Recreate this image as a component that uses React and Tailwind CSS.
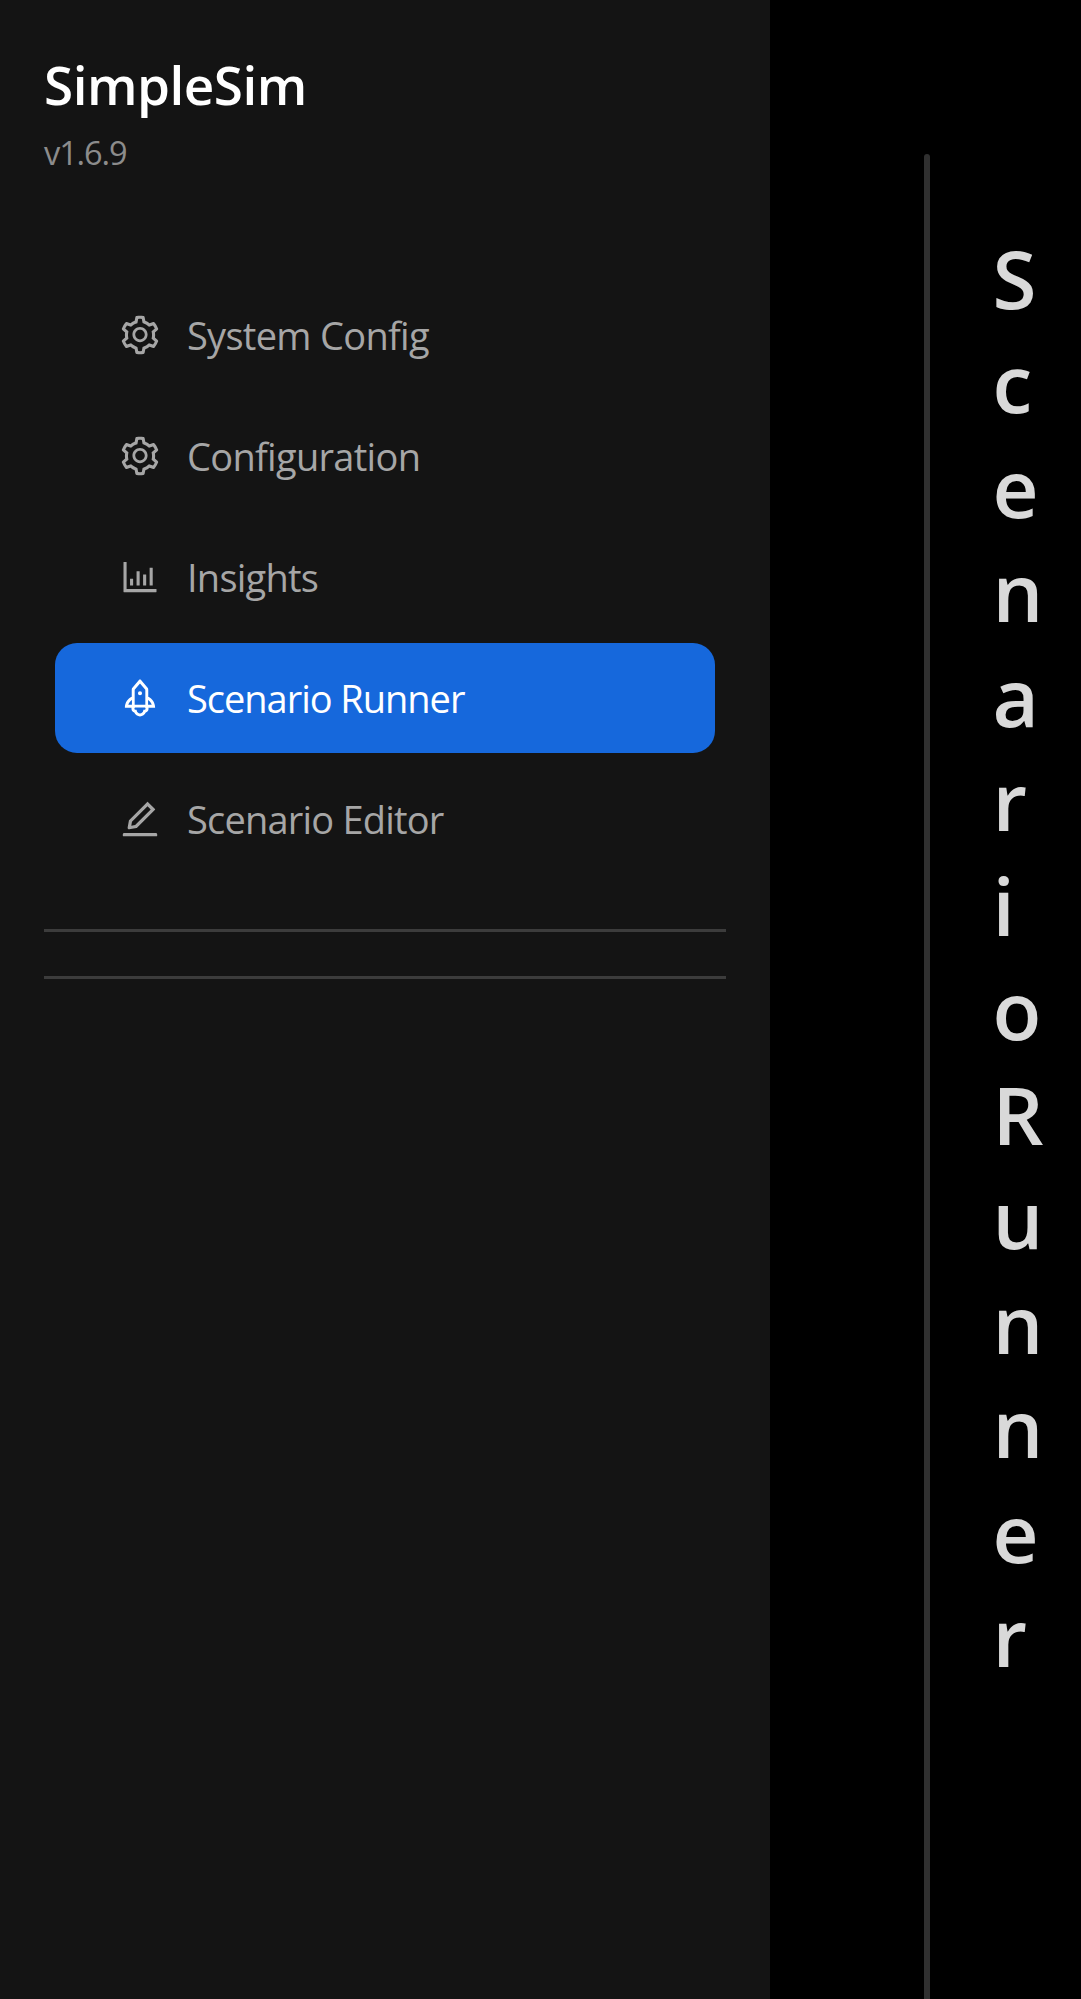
import { AiOutlineSetting, AiOutlineBarChart, AiOutlineRocket, AiOutlineEdit } from "react-icons/ai";

const items = [
  { label: "System Config", Icon: AiOutlineSetting, tracking: "tracking-[-0.7px]" },
  { label: "Configuration", Icon: AiOutlineSetting, tracking: "tracking-[-0.7px]" },
  { label: "Insights", Icon: AiOutlineBarChart, tracking: "tracking-[-0.75px]" },
  { label: "Scenario Runner", Icon: AiOutlineRocket, tracking: "tracking-[-1.03px]", active: true },
  { label: "Scenario Editor", Icon: AiOutlineEdit, tracking: "tracking-[-0.8px]" },
];

export default function App() {
  return (
    <div className="flex h-[1999px] w-[1081px] overflow-hidden bg-black font-['Open_Sans','Noto_Sans',sans-serif]">
      <aside className="w-[770px] shrink-0 bg-[#141414] px-11 pt-[49px]">
        <h1 className="h-[77px] text-[53px] leading-[72px] font-[650] tracking-[-0.5px] text-white">SimpleSim</h1>
        <p className="h-[54px] text-[32.5px] leading-[54px] tracking-[-1.1px] text-[#8c8c8c]">v1.6.9</p>
        <nav className="mx-[11px] mt-[100.4px] flex h-[594px] flex-col gap-[11px]">
          {items.map(({ label, Icon, tracking, active }) => (
            <div key={label} className={active ? "flex h-[110px] shrink-0 items-center rounded-[22px] bg-[#1668dc] pl-[63.4px] text-white" : "flex h-[110px] shrink-0 items-center pl-[63.4px] text-[#a6a6a6]"}>
              <Icon className="size-11" />
              <span className={`ml-[24.6px] text-[38px] ${tracking}`}>{label}</span>
            </div>
          ))}
        </nav>
        <div className="mt-[54.6px] flex flex-col gap-11">
          <div className="h-[3px] bg-[#3c3c3c]" />
          <div className="h-[3px] bg-[#3c3c3c]" />
        </div>
      </aside>
      <main className="mt-[154px] ml-[154px] flex flex-1">
        <div className="w-[5.5px] shrink-0 rounded-t-full bg-[#303030]" />
        <h2 className="pt-[71.5px] pl-[63px] text-[80px] font-[640] text-[#d9d9d9]">
          {"ScenarioRunner".split("").map((c, i) => (
            <span key={i} className="block h-[104.5px] leading-[104.5px]">{c}</span>
          ))}
        </h2>
      </main>
    </div>
  );
}
